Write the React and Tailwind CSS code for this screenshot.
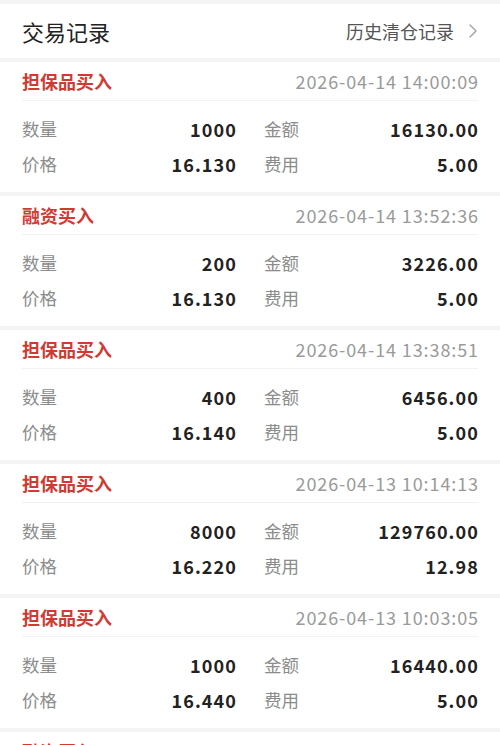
import React from 'react'

const records = [
  { type: '担保品买入', time: '2026-04-14 14:00:09', qty: '1000', amount: '16130.00', price: '16.130', fee: '5.00' },
  { type: '融资买入', time: '2026-04-14 13:52:36', qty: '200', amount: '3226.00', price: '16.130', fee: '5.00' },
  { type: '担保品买入', time: '2026-04-14 13:38:51', qty: '400', amount: '6456.00', price: '16.140', fee: '5.00' },
  { type: '担保品买入', time: '2026-04-13 10:14:13', qty: '8000', amount: '129760.00', price: '16.220', fee: '12.98' },
  { type: '担保品买入', time: '2026-04-13 10:03:05', qty: '1000', amount: '16440.00', price: '16.440', fee: '5.00' },
  { type: '融资买入', time: '2026-04-13 09:48:22', qty: '500', amount: '8200.00', price: '16.400', fee: '5.00' },
]

const font = { fontFamily: '"Noto Sans CJK SC", sans-serif' }

const Cell = ({ label, value }) => (
  <div className='flex items-center justify-between h-[35px]'>
    <span className='text-[17.5px] text-[#8c8c8c]'>{label}</span>
    <span className='text-[18px] font-bold text-[#222] tracking-[1.1px] -mr-[1px]'>{value}</span>
  </div>
)

const App = () => {
  return (
    <div className='w-[500px] h-[745px] overflow-hidden bg-[#f4f4f4] pt-[4px]' style={font}>
      <div className='flex items-center justify-between h-[54px] bg-white px-[22px]'>
        <p className='text-[22px] text-[#222]'>交易记录</p>
        <div className='flex items-center gap-[14px] text-[18px] text-[#555]'>
          <span>历史清仓记录</span>
          <svg width='10' height='16' viewBox='0 0 10 16' fill='none'>
            <path d='M2 2l6 6-6 6' stroke='#aaa' strokeWidth='1.6' strokeLinecap='round' strokeLinejoin='round' />
          </svg>
        </div>
      </div>

      <div className='flex flex-col gap-[4px] mt-[4px]'>
        {records.map((r, i) => (
          <div key={i} className='bg-white px-[22px] h-[130px] shrink-0'>
            <div className='flex items-center justify-between h-[39px] border-b border-[#f2f2f2]'>
              <span className='text-[18px] font-bold text-[#d03a33]'>{r.type}</span>
              <span className='text-[18px] text-[#9a9a9a] tracking-[0.9px] -mr-[1px]'>{r.time}</span>
            </div>
            <div className='grid grid-cols-2 gap-x-[28px] pt-[11px]'>
              <Cell label='数量' value={r.qty} />
              <Cell label='金额' value={r.amount} />
              <Cell label='价格' value={r.price} />
              <Cell label='费用' value={r.fee} />
            </div>
          </div>
        ))}
      </div>
    </div>
  )
}

export default App
